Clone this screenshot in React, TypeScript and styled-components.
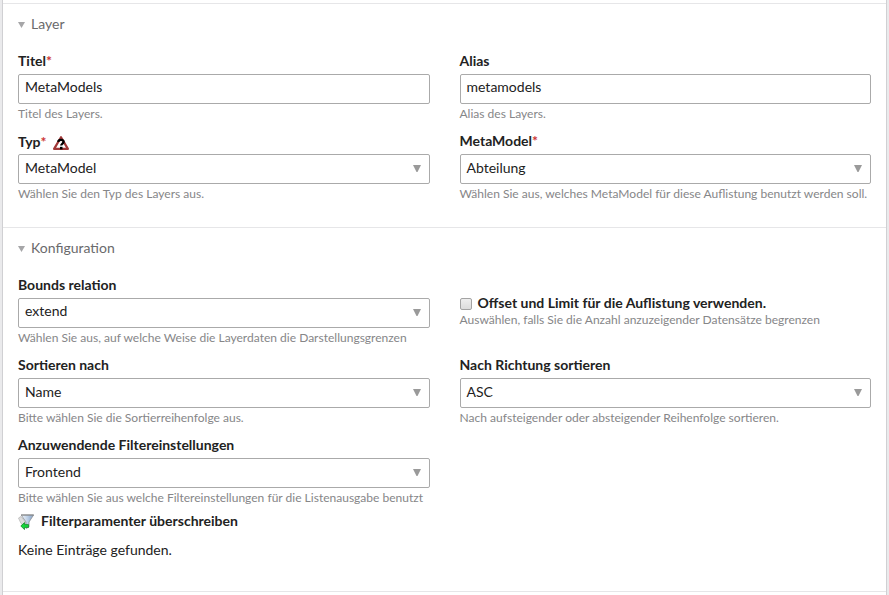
import React from 'react';
import styled, { createGlobalStyle } from 'styled-components';

const GlobalStyle = createGlobalStyle`
  *, *::before, *::after { box-sizing: border-box; }
  body {
    margin: 0;
    background: #eaeaec;
    color: #222;
    font-family: Lato, Carlito, sans-serif;
    font-size: 14px;
    overflow: hidden;
  }
`;

const Panel = styled.main`
  width: 885px;
  height: 595px;
  margin-left: 2px;
  padding-top: 3px;
  background: #fff;
  border: solid #d0d0d3;
  border-width: 0 1px;
`;

const Section = styled.section<{ $height: number }>`
  height: ${p => p.$height}px;
  padding: 0 15px;
  border-top: 1px solid #e6e6e8;
`;

const Legend = styled.h2`
  display: flex;
  align-items: center;
  gap: 6px;
  height: 40px;
  margin: 0 0 10px;
  padding-bottom: 2px;
  color: #6a6a6c;
  font-size: 14px;
  font-weight: 400;
`;

const Columns = styled.div`
  display: grid;
  grid-template-columns: 411.5px 411.5px;
  column-gap: 30px;
  grid-auto-rows: 80px;
`;

const Field = styled.div`
  display: flex;
  flex-direction: column;
  min-width: 0;
`;

const Label = styled.label<{ $lowered?: boolean }>`
  display: flex;
  align-items: center;
  height: 20px;
  padding-bottom: ${p => (p.$lowered ? 5 : 7)}px;
  font-weight: 700;
  line-height: 15px;
  white-space: nowrap;
`;

const Required = styled.span`
  color: #c33;
`;

const Control = styled.div<{ $raised?: boolean }>`
  display: flex;
  align-items: flex-start;
  justify-content: space-between;
  flex: none;
  height: 30px;
  padding: ${p => (p.$raised ? 3 : 4)}px 8px 0 6px;
  border: 1px solid #aaa;
  border-radius: 2px;
  line-height: 18px;
`;

const Help = styled.p`
  margin: 2px 0 0;
  color: #868688;
  font-size: 12.04px;
  line-height: 16px;
  white-space: nowrap;
`;

const CheckField = styled(Field)`
  padding-top: 18px;
`;

const CheckLabel = styled.label`
  display: flex;
  align-items: center;
  gap: 6px;
  height: 14px;
  padding-bottom: 2px;
  font-size: 14.03px;
  font-weight: 700;
  white-space: nowrap;
`;

const Checkbox = styled.span`
  width: 12px;
  height: 12px;
  margin-top: 4px;
  border: 1px solid #a3a3a3;
  border-radius: 2px;
  background: linear-gradient(#eee, #dcdcdc);
`;

const FilterHeading = styled.h3`
  display: flex;
  align-items: center;
  gap: 7px;
  height: 17px;
  margin: -6px 0 0;
  font-size: 14.03px;
  font-weight: 700;
`;

const Empty = styled.p`
  margin: 12px 0 0;
  line-height: 17px;
`;

const WarningSvg = styled.svg`
  margin: 2px 0 0 6px;
`;

const ArrowSvg = styled.svg<{ $top: number }>`
  margin-top: ${p => p.$top}px;
`;

const FilterSvg = styled.svg`
  margin-top: 2px;
`;

const LegendArrow = () => (
  <ArrowSvg $top={4} width="7" height="6" viewBox="0 0 7 6"><path d="M0 0H7L3.5 6Z" fill="#a6a6a8" /></ArrowSvg>
);

const SelectArrow = ({ raised }: { raised?: boolean }) => (
  <ArrowSvg $top={raised ? 7 : 6} width="8" height="7" viewBox="0 0 8 7"><path d="M0 0H8L4.5 7H3.5Z" fill="#9a9a9a" /></ArrowSvg>
);

const Warning = () => (
  <WarningSvg width="16" height="14" viewBox="0 0 16 14">
    <path d="M8 1.2L14.9 12.9H1.1Z" fill="#fff" stroke="#a03838" strokeWidth="2.2" strokeLinejoin="round" />
    <path d="M5.2 5.8C5.5 3.2 10.8 3.2 10.6 5.9C10.5 7.6 8.2 7.6 8.2 9.6" fill="none" stroke="#000" strokeWidth="2.3" />
    <path d="M7 10.8H9.5V13.4H7Z" fill="#000" />
  </WarningSvg>
);

const FilterIcon = () => (
  <FilterSvg width="16" height="16" viewBox="0 0 16 16">
    <defs>
      <linearGradient id="funnel">
        <stop offset="0" stopColor="#f4f7fa" />
        <stop offset="0.55" stopColor="#b8cce4" />
        <stop offset="1" stopColor="#819dc1" />
      </linearGradient>
    </defs>
    <path d="M0.5 4L3 2.5L8 9L6 12L3 9.5Z" fill="#ddd" stroke="#b5b5b5" strokeWidth="0.7" />
    <path d="M3.2 1H15.6L11 8V13L8 14.5V8Z" fill="url(#funnel)" stroke="#8a8f96" strokeWidth="0.8" />
    <path d="M3 1H15.8" stroke="#858585" />
    <path d="M2.8 12L6.5 8.6V10.6H10.5V13.4H6.5V15.6Z" fill="#13d83b" stroke="#168b2b" strokeWidth="0.8" />
  </FilterSvg>
);

interface FormFieldProps {
  label: string;
  value: string;
  help: string;
  required?: boolean;
  select?: boolean;
  warning?: boolean;
  raised?: boolean;
}

const FormField = ({ label, value, help, required, select, warning, raised }: FormFieldProps) => (
  <Field>
    <Label $lowered={warning}>{label}{required && <Required>*</Required>}{warning && <Warning />}</Label>
    <Control $raised={raised}>{value}{select && <SelectArrow raised={raised} />}</Control>
    <Help>{help}</Help>
  </Field>
);

export default function App() {
  return (
    <>
      <GlobalStyle />
      <Panel>
        <Section $height={224}>
          <Legend><LegendArrow />Layer</Legend>
          <Columns>
            <FormField label="Titel" required raised value="MetaModels" help="Titel des Layers." />
            <FormField label="Alias" raised value="metamodels" help="Alias des Layers." />
            <FormField label="Typ" required warning select value="MetaModel" help="Wählen Sie den Typ des Layers aus." />
            <FormField label="MetaModel" required select value="Abteilung" help="Wählen Sie aus, welches MetaModel für diese Auflistung benutzt werden soll." />
          </Columns>
        </Section>
        <Section $height={364}>
          <Legend><LegendArrow />Konfiguration</Legend>
          <Columns>
            <FormField label="Bounds relation" select raised value="extend" help="Wählen Sie aus, auf welche Weise die Layerdaten die Darstellungsgrenzen" />
            <CheckField>
              <CheckLabel><Checkbox />Offset und Limit für die Auflistung verwenden.</CheckLabel>
              <Help>Auswählen, falls Sie die Anzahl anzuzeigender Datensätze begrenzen</Help>
            </CheckField>
            <FormField label="Sortieren nach" select value="Name" help="Bitte wählen Sie die Sortierreihenfolge aus." />
            <FormField label="Nach Richtung sortieren" select value="ASC" help="Nach aufsteigender oder absteigender Reihenfolge sortieren." />
            <FormField label="Anzuwendende Filtereinstellungen" select value="Frontend" help="Bitte wählen Sie aus welche Filtereinstellungen für die Listenausgabe benutzt" />
          </Columns>
          <FilterHeading><FilterIcon />Filterparamenter überschreiben</FilterHeading>
          <Empty>Keine Einträge gefunden.</Empty>
        </Section>
        <Section $height={1} />
      </Panel>
    </>
  );
}
